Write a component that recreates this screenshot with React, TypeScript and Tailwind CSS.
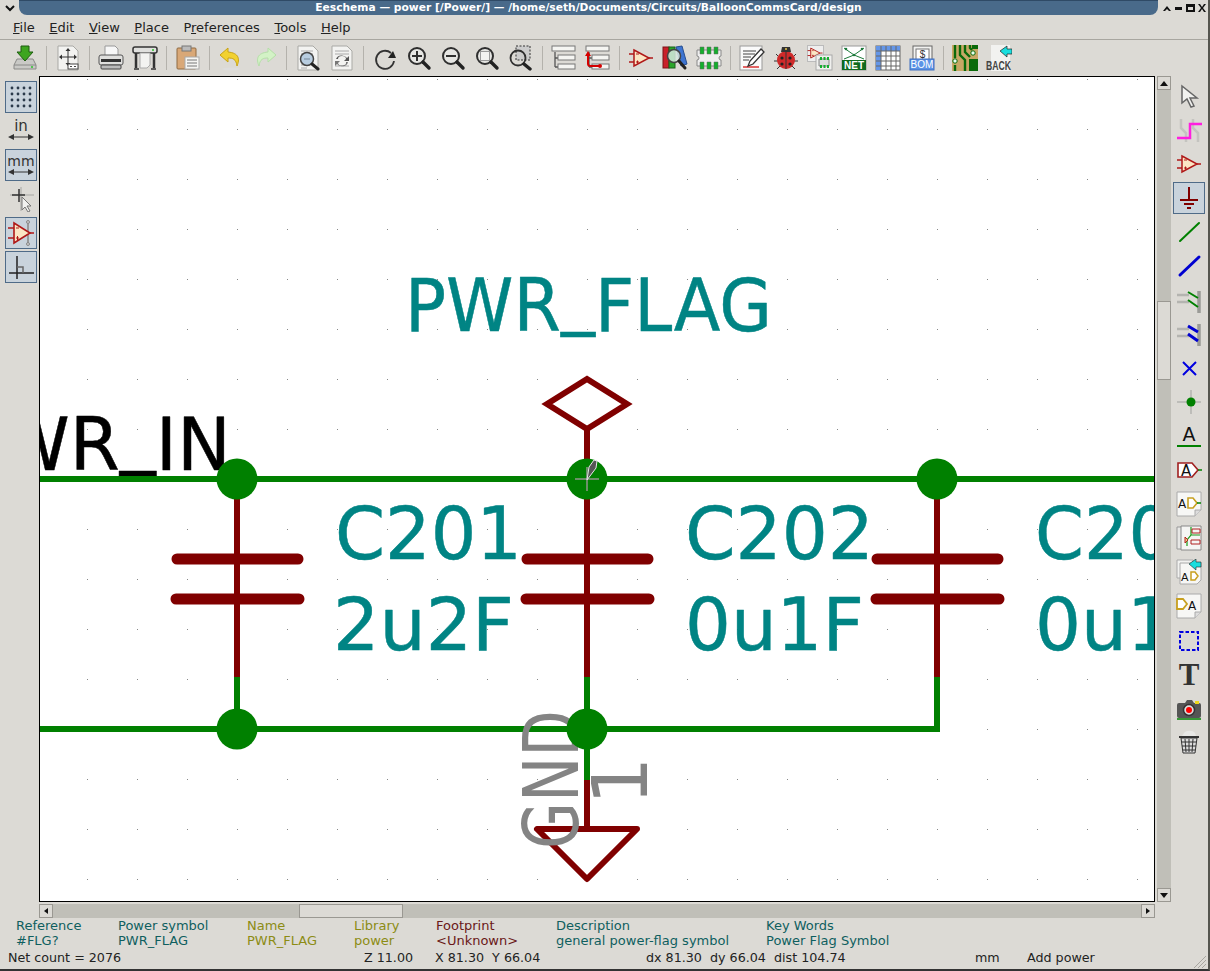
import type { ReactNode } from "react";

const Ico = ({ children }: { children: ReactNode }) => (
  <svg width="26" height="26" viewBox="0 0 26 26" fill="none">
    {children}
  </svg>
);

const Sep = () => (
  <div className="w-[9px] h-[24px] flex justify-center">
    <div className="w-px h-full bg-[#b4b2ac]" />
  </div>
);

const Btn = ({ children, active }: { children: ReactNode; active?: boolean }) => (
  <div className="w-[34px] h-[34px] flex items-center justify-center">
    <div className={`w-[32px] h-[32px] flex items-center justify-center ${active ? "border border-[#4f6b88] bg-[#c9d3dc]" : ""}`}>{children}</div>
  </div>
);

const Paper = () => <path d="M3 1h15l5 5v19H3z" fill="#f3f3f1" stroke="#a9a9a5" />;

const Magnifier = ({ children }: { children?: ReactNode }) => (
  <Ico>
    <circle cx="11" cy="11" r="8" fill="#e6e6e3" stroke="#2f2f2f" strokeWidth="2" />
    {children}
    <path d="M17 17l6 6" stroke="#222" strokeWidth="3.4" strokeLinecap="round" />
  </Ico>
);

const OpAmp = ({ scale = 1 }: { scale?: number }) => (
  <g transform={`scale(${scale})`}>
    <path d="M6 5l15 8-15 8z" fill="#fbe6c4" stroke="#b01818" strokeWidth="1.5" />
    <path d="M1 9h5M1 17h5M21 13h4" stroke="#b01818" strokeWidth="1.5" />
    <path d="M8 9h3M8 17h3M9.5 15.5v3" stroke="#b01818" />
  </g>
);

const HierBoxes = () => (
  <>
    <path d="M4 7v15M4 13h6M4 22h6" stroke="#555" strokeWidth="1.3" />
    <rect x="1" y="1" width="23" height="5" fill="#f5f5f2" stroke="#777" />
    <rect x="7" y="10" width="17" height="5" fill="#f5f5f2" stroke="#777" />
    <rect x="7" y="19" width="17" height="5" fill="#f5f5f2" stroke="#777" />
  </>
);

const TopIcons: ReactNode[][] = [
  [
    <Ico key="save">
      <path d="M5 14h16l3 6v4H2v-4z" fill="#c9c9c6" stroke="#8a8a88" />
      <path d="M2 20h22" stroke="#8a8a88" />
      <circle cx="20" cy="22" r="1" fill="#2bc22b" />
      <path d="M9 1h8v6h4l-8 9-8-9h4z" fill="#3da51f" stroke="#1e5d10" />
    </Ico>,
  ],
  [
    <Ico key="page">
      <Paper />
      <path d="M13 5v14M6 12h14" stroke="#333" />
      <path d="M13 3l-2.5 3h5zM13 21l-2.5-3h5zM4 12l3-2.5v5zM22 12l-3-2.5v5z" fill="#333" />
      <rect x="13" y="19" width="10" height="5" fill="#fff" stroke="#444" />
      <path d="M15 21.500h2M19 21.500h2" stroke="#444" />
    </Ico>,
    <Sep key="s" />,
    <Ico key="print">
      <path d="M7 1h10l3 3v7H7z" fill="#f7f7f7" stroke="#999" />
      <rect x="1" y="10" width="24" height="10" rx="2" fill="#dfdfdd" stroke="#555" />
      <rect x="3" y="14" width="20" height="3" fill="#333" />
      <rect x="3" y="20" width="20" height="4" rx="1" fill="#bbb" stroke="#444" />
    </Ico>,
    <Ico key="plot">
      <rect x="1" y="2" width="24" height="6" rx="2" fill="#e0e0de" stroke="#333" strokeWidth="1.5" />
      <circle cx="21" cy="5" r="1" fill="#2bc22b" />
      <path d="M4 8v15M22 8v15" stroke="#333" strokeWidth="2.5" />
      <path d="M2 24h5M19 24h5" stroke="#333" strokeWidth="1.5" />
      <path d="M8 8h10v12l-3 3H8z" fill="#f3f3f1" stroke="#aaa" />
    </Ico>,
  ],
  [
    <Ico key="clip">
      <rect x="2" y="3" width="19" height="21" rx="1" fill="#d9a877" stroke="#8f6a42" />
      <rect x="7" y="1" width="9" height="5" fill="#bbb" stroke="#777" />
      <rect x="10" y="12" width="14" height="12" fill="#f5f5f2" stroke="#aaa" />
      <path d="M12 15h10M12 18h10M12 21h10" stroke="#777" />
    </Ico>,
  ],
  [
    <Ico key="undo">
      <path d="M10 3L2 10l8 7v-4c5 0 8 1 9 8 3-7 2-13-9-14z" fill="#f2d130" stroke="#c8a315" />
      <ellipse cx="13" cy="24" rx="9" ry="1.500" fill="#ddd" />
    </Ico>,
    <Ico key="redo">
      <path d="M16 3l8 7-8 7v-4c-5 0-8 1-9 8-3-7-2-13 9-14z" fill="#d3f2c6" stroke="#b5dfa8" />
    </Ico>,
  ],
  [
    <Ico key="find">
      <Paper />
      <path d="M6 6h12M6 9h12M6 20h8M6 23h6" stroke="#aaa" />
      <circle cx="12" cy="14" r="6.500" fill="#b8cde0" stroke="#444" strokeWidth="1.500" />
      <path d="M9 14h6" stroke="#789" />
      <path d="M17 19l6 5" stroke="#222" strokeWidth="3" strokeLinecap="round" />
    </Ico>,
    <Ico key="refind">
      <Paper />
      <path d="M6 6h14M6 9h14M6 21h14" stroke="#aaa" />
      <path d="M7 14a6 5 0 0 1 11-1l2-2v5h-5l2-2a4 3 0 0 0-8 0z" fill="#555" />
      <path d="M19 17a6 5 0 0 1-11 2l-2 2v-5h5l-2 2a4 3 0 0 0 8-1z" fill="#777" />
    </Ico>,
  ],
  [
    <Ico key="rot">
      <path d="M19 8a9 9 0 1 0 3 8" stroke="#333" strokeWidth="1.800" />
      <path d="M16 13h8l-3-7z" fill="#222" />
    </Ico>,
    <Magnifier key="zi">
      <path d="M6 11h10M11 6v10" stroke="#2f2f2f" strokeWidth="2" />
    </Magnifier>,
    <Magnifier key="zo">
      <path d="M6 11h10" stroke="#2f2f2f" strokeWidth="2" />
    </Magnifier>,
    <Magnifier key="zf">
      <rect x="6.500" y="6.500" width="9" height="9" fill="#f2f2f0" stroke="#999" />
    </Magnifier>,
    <Ico key="zs">
      <rect x="8" y="1" width="14" height="14" fill="#ccc" stroke="#333" strokeDasharray="2 1.500" />
      <circle cx="10" cy="13" r="7.500" stroke="#2f2f2f" strokeWidth="1.800" />
      <path d="M16 19l6 5" stroke="#222" strokeWidth="3.400" strokeLinecap="round" />
    </Ico>,
  ],
  [
    <Ico key="h1">
      <HierBoxes />
    </Ico>,
    <Ico key="h2">
      <HierBoxes />
      <path d="M3 10v9c0 2 2 2 3 2h9" stroke="#d40000" strokeWidth="2" />
      <path d="M3 6l-3 5h6z" fill="#d40000" />
      <circle cx="15" cy="21" r="2" fill="#d40000" />
    </Ico>,
  ],
  [
    <Ico key="sym">
      <OpAmp />
    </Ico>,
    <Ico key="lib">
      <rect x="1" y="2" width="6" height="21" fill="#c9202a" stroke="#7a1218" />
      <rect x="7" y="2" width="6" height="21" fill="#2aa52a" stroke="#186018" />
      <path d="M14 2l6-1 5 18-6 2z" fill="#3d74d1" stroke="#274e90" />
      <circle cx="12" cy="11" r="6.500" fill="#d7e7df" fillOpacity="0.85" stroke="#444" strokeWidth="1.500" />
      <path d="M17 16l6 7" stroke="#222" strokeWidth="3" strokeLinecap="round" />
    </Ico>,
    <Ico key="fp">
      <path d="M1 5h24v6a2 2 0 0 0 0 4v6H1v-6a2 2 0 0 0 0-4z" fill="#eee" stroke="#888" />
      <path d="M4 2h4v7H4zM11 2h4v7h-4zM18 2h4v7h-4zM4 17h4v7H4zM11 17h4v7h-4zM18 17h4v7h-4z" fill="#14ae2e" stroke="#666" strokeWidth="0.500" />
    </Ico>,
  ],
  [
    <Ico key="ann">
      <rect x="1" y="1" width="22" height="24" fill="#fafafa" stroke="#999" />
      <path d="M4 6h13M4 9h12M4 12h8M4 15h6" stroke="#444" />
      <path d="M4 22h16" stroke="#d40000" strokeWidth="1.200" />
      <path d="M22 4l3 3-11 12-5 2 2-5z" fill="#fff" stroke="#333" strokeWidth="1.300" />
    </Ico>,
    <Ico key="bug">
      <path d="M3 9l3 3M23 9l-3 3M1 16h4M25 16h-4M4 24l3-3M22 24l-3-3" stroke="#333" />
      <circle cx="13" cy="15" r="9" fill="#cf2a2a" />
      <path d="M9 2l8 0 1 5H8z" fill="#333" />
      <path d="M13 7v17" stroke="#333" />
      <circle cx="9" cy="13" r="1.600" fill="#222" />
      <circle cx="17" cy="13" r="1.600" fill="#222" />
      <circle cx="9" cy="19" r="1.600" fill="#222" />
      <circle cx="17" cy="19" r="1.600" fill="#222" />
      <circle cx="13" cy="4" r="1" fill="#ecc94b" />
    </Ico>,
    <Ico key="s2f">
      <rect x="0.500" y="0.500" width="16" height="16" fill="#eee" stroke="#bbb" />
      <OpAmp scale={0.62} />
      <rect x="9" y="10" width="16" height="15" fill="#f0f0ee" stroke="#aaa" />
      <path d="M12 14h10v7H12z" fill="#ddd" stroke="#888" />
      <path d="M13 12h2v3h-2zM16.500 12h2v3h-2zM20 12h2v3h-2zM13 20h2v3h-2zM16.500 20h2v3h-2zM20 20h2v3h-2z" fill="#14ae2e" />
    </Ico>,
    <Ico key="net">
      <rect x="1" y="1" width="24" height="24" fill="#fff" stroke="#999" />
      <path d="M3 3l10 7 10-7M3 14l10-4 10 4" stroke="#1c7a3a" />
      <circle cx="5" cy="4" r="1.300" fill="#1c7a3a" />
      <circle cx="21" cy="4" r="1.300" fill="#1c7a3a" />
      <circle cx="13" cy="10" r="1.300" fill="#1c7a3a" />
      <rect x="1" y="15" width="24" height="10" fill="#0f6a1e" />
      <text x="13" y="24" textAnchor="middle" fontFamily="'Liberation Sans', sans-serif" fontSize="10" fontWeight="700" fill="#fff">NET</text>
    </Ico>,
    <Ico key="tbl">
      <rect x="1" y="1" width="24" height="24" fill="#fff" stroke="#666" />
      <path d="M1 1h24v5H6v19H1z" fill="#6496e8" />
      <path d="M6 1v24M11 1v24M16 1v24M21 1v24M1 6h24M1 11h24M1 16h24M1 21h24" stroke="#666" />
    </Ico>,
    <Ico key="bom">
      <rect x="4" y="1" width="19" height="14" fill="#f2f2f0" stroke="#666" />
      <rect x="7" y="4" width="13" height="11" fill="#fff" stroke="#777" />
      <text x="13.500" y="13" textAnchor="middle" fontFamily="'Liberation Sans', sans-serif" fontSize="10" fill="#333">$</text>
      <rect x="1" y="14" width="24" height="11" fill="#5c93e6" stroke="#3f6fc0" />
      <text x="13" y="23" textAnchor="middle" fontFamily="'Liberation Sans', sans-serif" fontSize="10" fill="#fff">BOM</text>
    </Ico>,
  ],
  [
    <Ico key="pcb">
      <rect x="0" y="0" width="26" height="26" fill="#c8a866" />
      <path d="M3 0v13M8 0v10l5 5v11M13 0v7l5 5M18 0v3l2 2" stroke="#0a6a0a" strokeWidth="2.400" />
      <path d="M3 20v6" stroke="#0a6a0a" strokeWidth="2.400" />
      <rect x="17" y="14" width="9" height="12" fill="#0a6a0a" />
      <rect x="20" y="0" width="6" height="4" fill="#0a6a0a" />
      <circle cx="21" cy="8" r="2.200" fill="#e8fff0" stroke="#0a6a0a" />
      <circle cx="3" cy="16" r="2.200" fill="#e8fff0" stroke="#0a6a0a" />
    </Ico>,
    <Ico key="back">
      <path d="M5 0h19v26H5z" fill="#f2f2f0" />
      <path d="M14 6l7-5v3h5v5h-5v3z" fill="#19dede" stroke="#222" strokeWidth="0.700" />
      <text x="0" y="25" textLength={25} lengthAdjust="spacingAndGlyphs" fontFamily="'Liberation Sans', sans-serif" fontSize="12" fontWeight="700" fill="#444">BACK</text>
    </Ico>,
  ],
];

const LeftTools = () => (
  <div className="w-[39px] flex flex-col pl-[4px] pt-[4px]">
    <Btn active>
      <svg width="26" height="26" viewBox="0 0 26 26" fill="#2b3a4a">
        {[3, 9, 15, 21].flatMap((y) => [3, 9, 15, 21].map((x) => <circle key={`${x}-${y}`} cx={x + 1} cy={y + 1} r="1.400" />))}
      </svg>
    </Btn>
    <Btn>
      <svg width="28" height="26" viewBox="0 0 28 26">
        <text x="14" y="13" textAnchor="middle" fontFamily="'DejaVu Sans', sans-serif" fontSize="15" fill="#333">in</text>
        <path d="M5 19h18" stroke="#333" />
        <path d="M1 19l6-3v6zM27 19l-6-3v6z" fill="#333" />
      </svg>
    </Btn>
    <Btn active>
      <svg width="28" height="26" viewBox="0 0 28 26">
        <text x="14" y="14" textAnchor="middle" fontFamily="'DejaVu Sans', sans-serif" fontSize="14" fill="#333">mm</text>
        <path d="M5 20h18" stroke="#333" />
        <path d="M1 20l6-3v6zM27 20l-6-3v6z" fill="#333" />
      </svg>
    </Btn>
    <Btn>
      <Ico>
        <path d="M13 1v24M2 9h24" stroke="#b8b8b4" strokeWidth="1.500" />
        <path d="M11 3v13M4 9h13" stroke="#333" strokeWidth="1.500" />
        <path d="M14 11v13l3-3 3 5 2-1-3-5h4z" fill="#f2f2f0" stroke="#777" />
      </Ico>
    </Btn>
    <Btn active>
      <Ico>
        <path d="M20 1v24" stroke="#999" strokeWidth="2" />
        <circle cx="20" cy="2" r="1.500" fill="#ccc" stroke="#888" />
        <circle cx="20" cy="24" r="1.500" fill="#ccc" stroke="#888" />
        <path d="M6 3l16 10L6 23z" fill="#fbe6c4" stroke="#b01818" strokeWidth="1.600" />
        <path d="M0 8h6M0 18h6M22 13h4" stroke="#b01818" strokeWidth="1.500" />
        <path d="M8 8h3M8 18h3M9.500 16v4" stroke="#b01818" />
      </Ico>
    </Btn>
    <Btn active>
      <Ico>
        <path d="M9 2v23M1 19h25" stroke="#222" strokeWidth="1.500" />
        <path d="M9 13h6v6" stroke="#666" strokeWidth="1.500" />
      </Ico>
    </Btn>
  </div>
);

const DocFold = ({ children }: { children: ReactNode }) => (
  <Ico>
    <path d="M1 1h24v18l-6 6H1z" fill="#f7f7f5" stroke="#aaa" />
    <path d="M19 25v-6h6" fill="#ddd" stroke="#aaa" />
    {children}
  </Ico>
);

const LabelA = ({ x, y, size = 15 }: { x: number; y: number; size?: number }) => (
  <text x={x} y={y} fontFamily="'DejaVu Sans', sans-serif" fontSize={size} fill="#111">A</text>
);

const RightTools = () => (
  <div className="w-[35px] flex flex-col items-center pt-[3px]">
    <Btn>
      <Ico>
        <path d="M6 3v17l5-4 4 8 3-1-4-8h7z" fill="#f2f2f0" stroke="#666" strokeWidth="1.500" />
      </Ico>
    </Btn>
    <Btn>
      <Ico>
        <path d="M5 2v9l5 5v9M17 2v9l5 5v9" stroke="#c4c4c0" strokeWidth="2.500" />
        <path d="M1 21h13V7h12" stroke="#ff1fe0" strokeWidth="2.500" />
      </Ico>
    </Btn>
    <Btn>
      <Ico>
        <OpAmp />
      </Ico>
    </Btn>
    <Btn active>
      <Ico>
        <path d="M13 2v13" stroke="#800000" strokeWidth="2" />
        <path d="M4 15h18M8 19h10" stroke="#800000" strokeWidth="2" />
        <path d="M11 23h4" stroke="#800000" strokeWidth="2" />
      </Ico>
    </Btn>
    <Btn>
      <Ico>
        <path d="M4 22L23 4" stroke="#008000" strokeWidth="2" strokeLinecap="round" />
      </Ico>
    </Btn>
    <Btn>
      <Ico>
        <path d="M4 22L23 4" stroke="#0000d0" strokeWidth="3" strokeLinecap="round" />
      </Ico>
    </Btn>
    <Btn>
      <Ico>
        <path d="M1 8h12M1 15h12" stroke="#b4b4b0" strokeWidth="2.500" />
        <path d="M23 4v22" stroke="#9a9a96" strokeWidth="3.500" />
        <path d="M12 5l10 6M12 13l10 7" stroke="#008000" strokeWidth="2" />
      </Ico>
    </Btn>
    <Btn>
      <Ico>
        <path d="M1 8h12M1 15h12" stroke="#b4b4b0" strokeWidth="2.500" />
        <path d="M23 3v22" stroke="#9a9a96" strokeWidth="3.500" />
        <path d="M12 5l10 6M12 13l10 7" stroke="#0000d0" strokeWidth="3" />
      </Ico>
    </Btn>
    <Btn>
      <Ico>
        <path d="M7 7l13 13M20 7L7 20" stroke="#0000e0" strokeWidth="2" />
      </Ico>
    </Btn>
    <Btn>
      <Ico>
        <path d="M1 13h24M15 1v24" stroke="#bdbdb9" strokeWidth="2" />
        <circle cx="15" cy="13" r="4.500" fill="#008000" />
      </Ico>
    </Btn>
    <Btn>
      <Ico>
        <text x="13" y="18" textAnchor="middle" fontFamily="'DejaVu Sans', sans-serif" fontSize="19" fill="#111">A</text>
        <path d="M1 23h24" stroke="#008000" strokeWidth="2" />
      </Ico>
    </Btn>
    <Btn>
      <Ico>
        <path d="M2 6h14l6 7-6 7H2z" fill="#fff" stroke="#a02020" strokeWidth="1.600" />
        <path d="M22 13h4" stroke="#008000" strokeWidth="1.500" />
        <LabelA x={5} y={19} />
      </Ico>
    </Btn>
    <Btn>
      <DocFold>
        <LabelA x={2} y={17} size={12} />
        <path d="M12 7h5l4 5-4 5h-5z" fill="#fff" stroke="#c8a020" strokeWidth="1.600" />
        <path d="M21 12h4" stroke="#008000" strokeWidth="1.500" />
      </DocFold>
    </Btn>
    <Btn>
      <Ico>
        <path d="M1 2h20v22H1z" fill="#e8e8e6" stroke="#999" />
        <path d="M5 1h20v24H5z" fill="#f5f5f3" stroke="#888" />
        <path d="M15 2v8l-4 5v6M15 10h9" stroke="#1a9a1a" strokeWidth="1.200" />
        <path d="M16 4h8v4h-8zM15 15h9v4h-9z" fill="#f5f5f3" stroke="#b02020" />
        <path d="M9 12l3 3-3 3z" fill="#f0d080" stroke="#b02020" />
      </Ico>
    </Btn>
    <Btn>
      <Ico>
        <path d="M1 1h16v18H1z" fill="#f2f2f0" stroke="#aaa" />
        <path d="M4 4h21v17l-4 4H4z" fill="#f7f7f5" stroke="#aaa" />
        <path d="M13 5l7-5v3h5v5h-5v3z" fill="#19dede" stroke="#222" strokeWidth="0.600" />
        <LabelA x={5} y={22} size={11} />
        <path d="M15 13h4l3 4-3 4h-4z" fill="#fff" stroke="#c8a020" strokeWidth="1.500" />
      </Ico>
    </Btn>
    <Btn>
      <DocFold>
        <path d="M1 6h6l4 5-4 5H1z" fill="#fff" stroke="#c8a020" strokeWidth="1.800" />
        <LabelA x={12} y={17} size={12} />
      </DocFold>
    </Btn>
    <Btn>
      <Ico>
        <rect x="4" y="5" width="18" height="18" stroke="#0000e0" strokeWidth="2" strokeDasharray="3.500 2" />
      </Ico>
    </Btn>
    <Btn>
      <svg width="26" height="26" viewBox="0 0 26 26" className="overflow-visible">
        <text x="13" y="24" textAnchor="middle" fontFamily="'Liberation Serif', serif" fontSize="31" fontWeight="700" fill="#333">T</text>
      </svg>
    </Btn>
    <Btn>
      <Ico>
        <rect x="1" y="8" width="24" height="15" rx="2" fill="#555" />
        <path d="M9 8l2-3h5l2 3z" fill="#555" />
        <circle cx="13" cy="15" r="5.500" fill="#ddd" stroke="#333" strokeWidth="1.500" />
        <circle cx="13" cy="15" r="3" fill="#f00" />
        <rect x="19" y="6" width="4" height="3" fill="#ecd71c" />
        <path d="M1 24h24" stroke="#008000" strokeWidth="1.500" />
      </Ico>
    </Btn>
    <Btn>
      <Ico>
        <path d="M8 4c2-3 9-3 11 0l1 3H6z" fill="#e8e8e6" />
        <path d="M3 8h20" stroke="#333" strokeWidth="2" />
        <path d="M5 9l2 15h12l2-15z" fill="#ddd" stroke="#333" />
        <path d="M9 10l1 13M13 10v13M17 10l-1 13M6 13h14M6 17h14M7 21h12" stroke="#333" />
      </Ico>
    </Btn>
  </div>
);

const teal = "#008484";
const red = "#800000";
const green = "#008000";
const gray = "#848484";
const stroke = "'DejaVu Sans', sans-serif";

const Label = ({ x, y, w, size, color, children }: { x: number; y: number; w: number; size: number; color: string; children: ReactNode }) => (
  <text x={x} y={y} textLength={w} lengthAdjust="spacingAndGlyphs" fontFamily={stroke} fontSize={size} fill={color} stroke={color} strokeWidth="0.500" strokeLinejoin="round">
    {children}
  </text>
);

const Capacitor = ({ x }: { x: number }) => (
  <g>
    <path d={`M${x} 479V679`} stroke={red} strokeWidth="6" />
    <path d={`M${x - 60} 559H${x + 61}M${x - 61} 599H${x + 62}`} stroke={red} strokeWidth="11" strokeLinecap="round" />
    <path d={`M${x} 677V729`} stroke={green} strokeWidth="6" />
  </g>
);

const Schematic = () => (
  <svg width="1114" height="824" viewBox="40 77 1114 824" className="block bg-white">
    <defs>
      <pattern id="grid" x="87" y="79" width="50" height="50" patternUnits="userSpaceOnUse">
        <rect width="1" height="1" fill="#888" />
      </pattern>
    </defs>
    <rect x="40" y="77" width="1114" height="824" fill="url(#grid)" />

    <Label x={405} y={331} w={367} size={73} color={teal}>
      PWR<tspan dy="-11">_</tspan><tspan dy="11">FLAG</tspan>
    </Label>
    <Label x={-45} y={470} w={276} size={73} color="#000">
      PWR<tspan dy="-11">_</tspan><tspan dy="11">IN</tspan>
    </Label>

    <path d="M40 479H1154" stroke={green} strokeWidth="6" />
    <path d="M40 729H937V677" stroke={green} strokeWidth="6" fill="none" />
    <path d="M587 429V479M547 404L587 379L627 404L587 429Z" stroke={red} strokeWidth="6" fill="none" />
    <Capacitor x={237} />
    <Capacitor x={587} />
    <Capacitor x={937} />

    <path d="M587 729V780" stroke={green} strokeWidth="6" />
    <path d="M587 780V829M537 829H637L587 879Z" stroke={red} strokeWidth="6" fill="none" strokeLinejoin="round" />

    <g>
      <text transform="translate(578 849) rotate(-90)" textLength={139} lengthAdjust="spacingAndGlyphs" fontFamily={stroke} fontSize="76" fill={gray}>GND</text>
      <text transform="translate(647 805) rotate(-90)" fontFamily={stroke} fontSize="76" fill={gray}>1</text>
    </g>

    {[
      [237, 479],
      [587, 479],
      [937, 479],
      [237, 729],
      [587, 729],
    ].map(([x, y]) => (
      <circle key={`${x}-${y}`} cx={x} cy={y} r="20.500" fill={green} />
    ))}

    <Label x={335} y={559} w={187} size={73} color={teal}>C201</Label>
    <Label x={333} y={650} w={181} size={73} color={teal}>2u2F</Label>
    <Label x={685} y={559} w={189} size={73} color={teal}>C202</Label>
    <Label x={685} y={650} w={179} size={73} color={teal}>0u1F</Label>
    <Label x={1035} y={559} w={138} size={73} color={teal}>C20</Label>
    <Label x={1035} y={650} w={138} size={73} color={teal}>0u1</Label>

    <path d="M575 479H599M587 467V491" stroke="#d9a0d0" />
    <path d="M587 480L589 467L594 460L597 461L596 468Z" fill="#555" stroke="#e8e8e8" />
  </svg>
);

const Tri = ({ d }: { d: string }) => (
  <svg width="8" height="8" viewBox="0 0 8 8" fill="#111">
    <path d={d} />
  </svg>
);

const ScrollBtn = ({ d }: { d: string }) => (
  <div className="w-[14px] h-[14px] shrink-0 border border-[#9a9892] bg-[#dcdad5] flex items-center justify-center">
    <Tri d={d} />
  </div>
);

const info = [
  { w: "w-[102px]", c: "text-[#0f5f5f]", a: "Reference", b: "#FLG?" },
  { w: "w-[129px]", c: "text-[#0f5f5f]", a: "Power symbol", b: "PWR_FLAG" },
  { w: "w-[107px]", c: "text-[#8c8c14]", a: "Name", b: "PWR_FLAG" },
  { w: "w-[82px]", c: "text-[#8c8c14]", a: "Library", b: "power" },
  { w: "w-[120px]", c: "text-[#6a1818]", a: "Footprint", b: "<Unknown>" },
  { w: "w-[210px]", c: "text-[#0f5f5f]", a: "Description", b: "general power-flag symbol" },
  { w: "w-[200px]", c: "text-[#0f5f5f]", a: "Key Words", b: "Power Flag Symbol" },
];

const menus = [
  ["F", "ile"],
  ["E", "dit"],
  ["V", "iew"],
  ["P", "lace"],
  ["P", "r", "eferences"],
  ["T", "ools"],
  ["H", "elp"],
];

const App = () => {
  return (
    <div className="w-[1210px] h-[971px] overflow-hidden flex flex-col bg-[#dcdad5] border-r-2 border-b-2 border-r-[#55554f] border-b-[#333] text-[13px] text-[#222]" style={{ fontFamily: "'DejaVu Sans', sans-serif" }}>
      {/* title bar */}
      <div className="h-[15px] shrink-0 flex bg-[#dcdad5]">
        <div className="w-[19px] flex items-center justify-center">
          <svg width="10" height="8" viewBox="0 0 10 8">
            <path d="M1 2l4 4 4-4" stroke="#111" strokeWidth="2" fill="none" />
          </svg>
        </div>
        <div className="flex-1 bg-[#496a8a] rounded-bl-[8px] rounded-br-[8px] border-t border-[#2f4a66] flex items-center justify-center font-bold text-white text-[10.7px] leading-none">
          Eeschema — power [/Power/] — /home/seth/Documents/Circuits/BalloonCommsCard/design
        </div>
        <div className="w-[50px] flex items-center pl-[4px]">
          <svg width="46" height="10" viewBox="0 0 46 10" fill="#111">
            <path d="M1 8l4-5 4 5-2 0-2-2-2 2z" />
            <rect x="13" y="4" width="7" height="3" />
            <path d="M24 1h9v8h-9zM26 4v3h5V4z" fillRule="evenodd" />
            <path d="M36 1h2l2 3 2-3h2l-3 4 3 4h-2l-2-3-2 3h-2l3-4z" />
          </svg>
        </div>
      </div>

      {/* menu */}
      <div className="h-[24px] shrink-0 flex items-center gap-[14.5px] pl-[13px] border-b border-[#a8a6a0] box-content">
        {menus.map((m) => (
          <span key={m.join("")} className="leading-none">
            {m.length === 3 ? (
              <>
                {m[0]}
                <span className="underline">{m[1]}</span>
                {m[2]}
              </>
            ) : (
              <>
                <span className="underline">{m[0]}</span>
                {m[1]}
              </>
            )}
          </span>
        ))}
      </div>

      {/* main toolbar */}
      <div className="h-[36px] shrink-0 flex items-center pl-[8px]">
        {TopIcons.map((group, i) => (
          <div key={i} className="flex items-center">
            {i > 0 && <Sep />}
            {group.map((icon, j) =>
              (icon as { key?: string }).key === "s" ? (
                <span key={j} className="flex items-center">{icon}</span>
              ) : (
                <Btn key={j}>{icon}</Btn>
              ),
            )}
          </div>
        ))}
      </div>

      {/* middle */}
      <div className="flex-1 flex min-h-0">
        <LeftTools />
        <div className="w-[1116px] flex flex-col">
          <div className="w-[1116px] h-[826px] border border-black overflow-hidden shrink-0">
            <Schematic />
          </div>
          <div className="flex h-[14px] mt-[2px] bg-[#c0bfb8]">
            <ScrollBtn d="M6 1v6L2 4z" />
            <div className="ml-[246px] w-[104px] bg-[#dcdad5] border border-[#9a9892]" />
            <div className="flex-1" />
            <ScrollBtn d="M2 1v6l4-3z" />
          </div>
        </div>
        <div className="w-[14px] ml-[2px] h-[826px] flex flex-col bg-[#c0bfb8]">
          <ScrollBtn d="M4 2l4 5H0z" />
          <div className="mt-[211px] h-[79px] bg-[#dcdad5] border border-[#9a9892]" />
          <div className="flex-1" />
          <ScrollBtn d="M0 2h8L4 7z" />
        </div>
        <RightTools />
      </div>

      {/* message panel */}
      <div className="h-[32px] shrink-0 flex pl-[16px] leading-[15px]">
        {info.map((c) => (
          <div key={c.a} className={`${c.w} ${c.c} shrink-0 whitespace-nowrap`}>
            <div>{c.a}</div>
            <div>{c.b}</div>
          </div>
        ))}
      </div>

      {/* status bar */}
      <div className="h-[19px] shrink-0 flex items-center whitespace-nowrap leading-none relative text-[12.7px] pb-[2px]">
        <div className="w-[364px] pl-[8px]">Net count = 2076</div>
        <div className="w-[71px]">Z 11.00</div>
        <div className="w-[211px]">X 81.30 &nbsp;Y 66.04</div>
        <div className="w-[329px]">dx 81.30 &nbsp;dy 66.04 &nbsp;dist 104.74</div>
        <div className="w-[52px]">mm</div>
        <div>Add power</div>
        <svg width="14" height="14" viewBox="0 0 14 14" className="absolute right-[1px] bottom-0">
          <path d="M13 1L1 13M13 5L5 13M13 9L9 13" stroke="#a8a6a0" />
        </svg>
      </div>
    </div>
  );
};

export default App;
